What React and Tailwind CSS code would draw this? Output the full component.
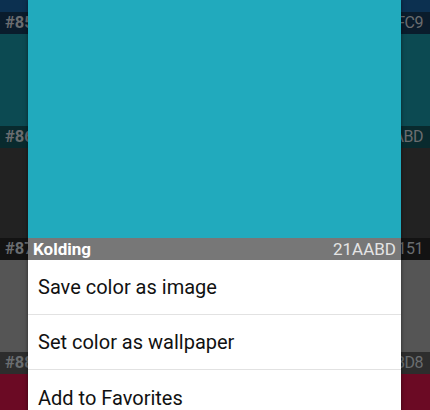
export default function App() {
  const rows = [
    { block: "#0c3050", h: 12, label: "#0a1c2c", left: "#85", right: "FC9" },
    { block: "#0c4a52", h: 92, label: "#092a2e", left: "#86", right: "ABD" },
    { block: "#222222", h: 90, label: "#131313", left: "#87", right: "151" },
    { block: "#555555", h: 92, label: "#2d2d2d", left: "#88", right: "BD8" },
    { block: "#6b0a24", h: 60, label: null },
  ];
  return (
    <div className="relative w-[430px] h-[410px] overflow-hidden bg-black" style={{ fontFamily: "Roboto, 'Liberation Sans', sans-serif" }}>
      <div className="flex flex-col">
        {rows.map((r, i) => (
          <div key={i} className="flex flex-col">
            <div style={{ backgroundColor: r.block, height: r.h }} />
            {r.label && (
              <div className="h-[22px] flex items-center justify-between pl-[5px] pr-[7px] leading-none" style={{ backgroundColor: r.label }}>
                <span className="font-bold text-[16.5px] text-[#6a6d70]">{r.left}</span>
                <span className="text-[16px] tracking-[-0.5px] text-[#6a6d70]">{r.right}</span>
              </div>
            )}
          </div>
        ))}
      </div>
      <div className="absolute left-[28px] top-0 w-[373px] flex flex-col shadow-[0_0_4px_rgba(0,0,0,0.5)]">
        <div className="h-[238px] bg-[#21AABD]" />
        <div className="h-[22px] bg-[#777777] flex items-center justify-between pl-[5px] pr-[5px] text-[17px] leading-none">
          <span className="font-bold text-white">Kolding</span>
          <span className="text-[#e4e4e4]">21AABD</span>
        </div>
        <div className="bg-white flex flex-col">
          <div className="h-[55px] flex items-center pl-[10px] text-[20px] text-[#111111] border-b border-[#e2e2e2]">Save color as image</div>
          <div className="h-[55px] flex items-center pl-[10px] text-[20px] text-[#111111] border-b border-[#e2e2e2]">Set color as wallpaper</div>
          <div className="h-[55px] flex items-center pl-[10px] text-[20px] text-[#111111]">Add to Favorites</div>
        </div>
      </div>
    </div>
  );
}
